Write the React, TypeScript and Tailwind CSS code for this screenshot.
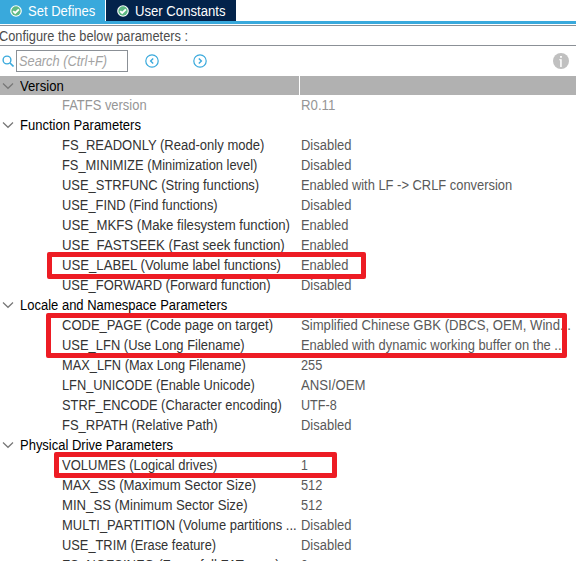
import React from "react";

type Row = { name: string; value: string; width: number; valueWidth: number; muted?: boolean };
type Group = { title: string; width: number; selected?: boolean; rows: Row[] };

const row = (name: string, width: number, value: string, valueWidth: number, muted = false): Row => ({
  name, width, value, valueWidth, muted,
});

const groups: Group[] = [
  { title: "Version", width: 44, selected: true, rows: [row("FATFS version", 85, "R0.11", 34, true)] },
  {
    title: "Function Parameters", width: 121,
    rows: [
      row("FS_READONLY (Read-only mode)", 202, "Disabled", 50),
      row("FS_MINIMIZE (Minimization level)", 195, "Disabled", 50),
      row("USE_STRFUNC (String functions)", 197, "Enabled with LF -> CRLF conversion", 211),
      row("USE_FIND (Find functions)", 156, "Disabled", 50),
      row("USE_MKFS (Make filesystem function)", 228, "Enabled", 47),
      row("USE_FASTSEEK (Fast seek function)", 223, "Enabled", 47),
      row("USE_LABEL (Volume label functions)", 219, "Enabled", 47),
      row("USE_FORWARD (Forward function)", 209, "Disabled", 50),
    ],
  },
  {
    title: "Locale and Namespace Parameters", width: 207,
    rows: [
      row("CODE_PAGE (Code page on target)", 211, "Simplified Chinese GBK (DBCS, OEM, Wind...", 270),
      row("USE_LFN (Use Long Filename)", 183, "Enabled with dynamic working buffer on the ...", 264),
      row("MAX_LFN (Max Long Filename)", 184, "255", 21),
      row("LFN_UNICODE (Enable Unicode)", 193, "ANSI/OEM", 64),
      row("STRF_ENCODE (Character encoding)", 220, "UTF-8", 36),
      row("FS_RPATH (Relative Path)", 156, "Disabled", 50),
    ],
  },
  {
    title: "Physical Drive Parameters", width: 153,
    rows: [
      row("VOLUMES (Logical drives)", 155, "1", 7),
      row("MAX_SS (Maximum Sector Size)", 194, "512", 21),
      row("MIN_SS (Minimum Sector Size)", 186, "512", 21),
      row("MULTI_PARTITION (Volume partitions ...", 235, "Disabled", 50),
      row("USE_TRIM (Erase feature)", 154, "Disabled", 50),
      row("FS_NOFSINFO (Force full FAT scan)", 218, "0", 7),
    ],
  },
];

/* Condenses the letters so that a label fills its measured width. */
function Label({ text, width, className = "" }: { text: string; width: number; className?: string }) {
  const ref = React.useRef<HTMLSpanElement>(null);
  const [scale, setScale] = React.useState(1);
  React.useLayoutEffect(() => {
    const el = ref.current;
    if (el) setScale(width / el.offsetWidth);
  }, [text, width]);
  return (
    <span className={`block shrink-0 ${className}`} style={{ width }}>
      <span ref={ref} className="inline-block origin-left whitespace-pre align-top" style={{ transform: `scaleX(${scale})` }}>
        {text}
      </span>
    </span>
  );
}

function Check() {
  return (
    <svg width="12" height="12" viewBox="0 0 12 12" className="shrink-0">
      <circle cx="6" cy="6" r="5.8" fill="#fff" />
      <circle cx="6" cy="6" r="4.7" fill="#5eb984" />
      <path d="M3.2 6.1 5.2 8 8.9 4.3" fill="none" stroke="#fff" strokeWidth="1.9" />
    </svg>
  );
}

function RoundChevron({ d }: { d: string }) {
  return (
    <svg width="14" height="14" viewBox="0 0 14 14" fill="none" stroke="#39a9dc" className="shrink-0">
      <circle cx="7" cy="7" r="6.2" strokeWidth="1.2" />
      <path d={d} strokeWidth="1.4" />
    </svg>
  );
}

export default function App() {
  return (
    <div className="relative flex h-[561px] w-[576px] flex-col overflow-hidden bg-white font-['Liberation_Sans',Arial,sans-serif] text-[14px] leading-[20px]">
      <div className="flex h-[21px] shrink-0 gap-px text-white">
        <div className="flex w-[105px] items-center gap-[6px] bg-[#39a9dc] pl-[10px]">
          <Check /><Label text="Set Defines" width={67} />
        </div>
        <div className="flex w-[130px] items-center gap-[6px] bg-[#03234b] pl-[11px]">
          <Check /><Label text="User Constants" width={90} />
        </div>
      </div>
      <div className="h-[3px] shrink-0 bg-[#39a9dc]" />
      <div className="mt-px flex h-[21px] shrink-0 items-center border-y border-[#8b9096] text-[#4c4c4c]">
        <Label text="Configure the below parameters :" width={189} className="-ml-px" />
      </div>
      <div className="flex h-[30px] shrink-0 items-center">
        <svg width="12" height="12" viewBox="0 0 12 12" fill="none" stroke="#39a9dc" className="ml-[2px] shrink-0">
          <circle cx="5" cy="5" r="3.9" strokeWidth="1.4" />
          <path d="m8 8 3.5 3.5" strokeWidth="1.6" />
        </svg>
        <div className="ml-[2px] flex h-[22px] w-[112px] items-center border border-[#8b9096] pl-[2px] italic text-[#a3a3a3]">
          <Label text="Search (Ctrl+F)" width={88} />
        </div>
        <div className="ml-[17px] flex gap-[34px]">
          <RoundChevron d="M8.2 4.4 5.6 7l2.6 2.6" />
          <RoundChevron d="M5.8 4.4 8.4 7 5.8 9.6" />
        </div>
        <svg width="16" height="16" viewBox="0 0 16 16" className="ml-auto mr-[7px]">
          <circle cx="8" cy="8" r="8" fill="#c0c0c0" />
          <path d="M7.1 3h1.8v1.8H7.1zM6.2 6.2h2.5V14H7.2V7.2h-1z" fill="#fff" />
        </svg>
      </div>
      <div>
        {groups.map((g) => (
          <div key={g.title}>
            <div className={`flex items-center ${g.selected ? "h-[19px] bg-[#b1b1b1]" : "h-[20px]"}`}>
              <svg width="12" height="8" viewBox="0 0 12 8" fill="none" stroke="#777" className="ml-[2px] mr-[6px]">
                <path d="m1 1.5 5 4.8 5-4.8" strokeWidth="1.2" />
              </svg>
              <Label text={g.title} width={g.width} className="text-black" />
              {g.selected && <div className="ml-[235px] h-full w-px bg-white" />}
            </div>
            {g.rows.map((r) => (
              <div key={r.name} className={`flex h-[20px] items-center ${r.muted ? "text-[#969696]" : ""}`}>
                <div className="w-[301px] shrink-0 pl-[62px]">
                  <Label text={r.name} width={r.width} className={r.muted ? "" : "text-[#333333]"} />
                </div>
                <Label text={r.value} width={r.valueWidth} className={r.muted ? "" : "text-[#595959]"} />
              </div>
            ))}
          </div>
        ))}
      </div>
      <div className="absolute left-[47px] top-[252px] h-[27px] w-[319px] rounded-[2px] border-[5px] border-[#ed1c24]" />
      <div className="absolute left-[46px] top-[313px] h-[45px] w-[521px] rounded-[2px] border-[5px] border-[#ed1c24]" />
      <div className="absolute left-[54px] top-[452px] h-[26px] w-[283px] rounded-[2px] border-[5px] border-[#ed1c24]" />
    </div>
  );
}
